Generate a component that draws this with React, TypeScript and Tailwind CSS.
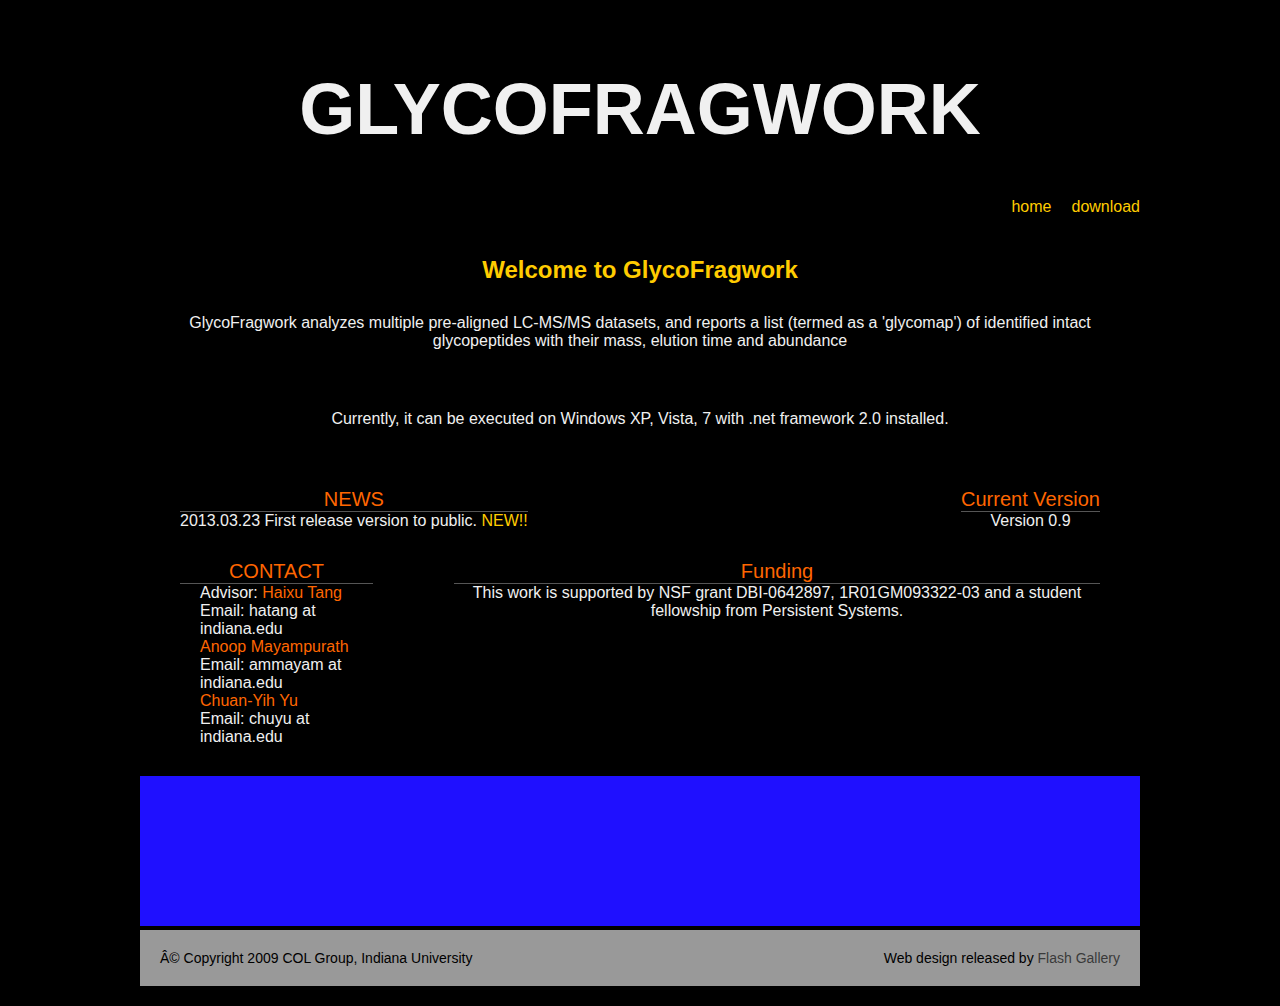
export default function App() {
  const font = { fontFamily: '"Liberation Sans", Arial, Helvetica, sans-serif' };
  return (
    <div className="min-h-[1006px] w-full bg-black text-[#f0f0f0]" style={font}>
      <div className="mx-auto w-[1000px] pt-[73px] pb-[20px]">
        <h1 className="text-center text-[72px] font-bold leading-[72px] text-[#f0f0f0]">GLYCOFRAGWORK</h1>
        <nav className="mt-[53px] flex justify-end gap-[20px] text-[16px] leading-[18px] text-[#ffcc00]">
          <a href="#">home</a>
          <a href="#">download</a>
        </nav>
        <div className="px-[40px]">
          <h2 className="mt-[40px] text-center text-[24px] font-bold leading-[28px] text-[#ffcc00]">Welcome to GlycoFragwork</h2>
          <p className="mt-[30px] text-center text-[16px] leading-[18px]">
            GlycoFragwork analyzes multiple pre-aligned LC-MS/MS datasets, and reports a list (termed as a 'glycomap') of identified intact glycopeptides with their mass, elution time and abundance
          </p>
          <p className="mt-[60px] text-center text-[16px] leading-[18px]">
            Currently, it can be executed on Windows XP, Vista, 7 with .net framework 2.0 installed.
          </p>

          <div className="mt-[60px] flex items-start justify-between">
            <div>
              <div className="border-b border-[#555] text-center text-[20px] leading-[23px] text-[#ff6600]">NEWS</div>
              <div className="text-[16px] leading-[18px]">
                2013.03.23 First release version to public. <span className="text-[#ffcc00]">NEW!!</span>
              </div>
            </div>
            <div>
              <div className="border-b border-[#555] text-center text-[20px] leading-[23px] text-[#ff6600]">Current Version</div>
              <div className="text-center text-[16px] leading-[18px]">Version 0.9</div>
            </div>
          </div>

          <div className="mt-[30px] flex items-start">
            <div className="w-[193px]">
              <div className="border-b border-[#555] text-center text-[20px] leading-[23px] text-[#ff6600]">CONTACT</div>
              <div className="pl-[20px] text-[16px] leading-[18px]">
                <div>
                  Advisor: <span className="text-[#ff6600]">Haixu Tang</span>
                </div>
                <div>Email: hatang at indiana.edu</div>
                <div className="text-[#ff6600]">Anoop Mayampurath</div>
                <div>Email: ammayam at indiana.edu</div>
                <div className="text-[#ff6600]">Chuan-Yih Yu</div>
                <div>Email: chuyu at indiana.edu</div>
              </div>
            </div>
            <div className="ml-[81px] flex-1">
              <div className="border-b border-[#555] text-center text-[20px] leading-[23px] text-[#ff6600]">Funding</div>
              <div className="text-center text-[16px] leading-[18px]">
                This work is supported by NSF grant DBI-0642897, 1R01GM093322-03 and a student fellowship from Persistent Systems.
              </div>
            </div>
          </div>
        </div>

        <div className="mt-[30px] h-[150px] bg-[#1f10ff]" />
        <div className="mt-[4px] flex h-[56px] items-center justify-between bg-[#999999] px-[20px] text-[14px] text-black">
          <span>Â© Copyright 2009 COL Group, Indiana University</span>
          <span>
            Web design released by <a href="#" className="text-[#3a3a3a]">Flash Gallery</a>
          </span>
        </div>
      </div>
    </div>
  );
}
